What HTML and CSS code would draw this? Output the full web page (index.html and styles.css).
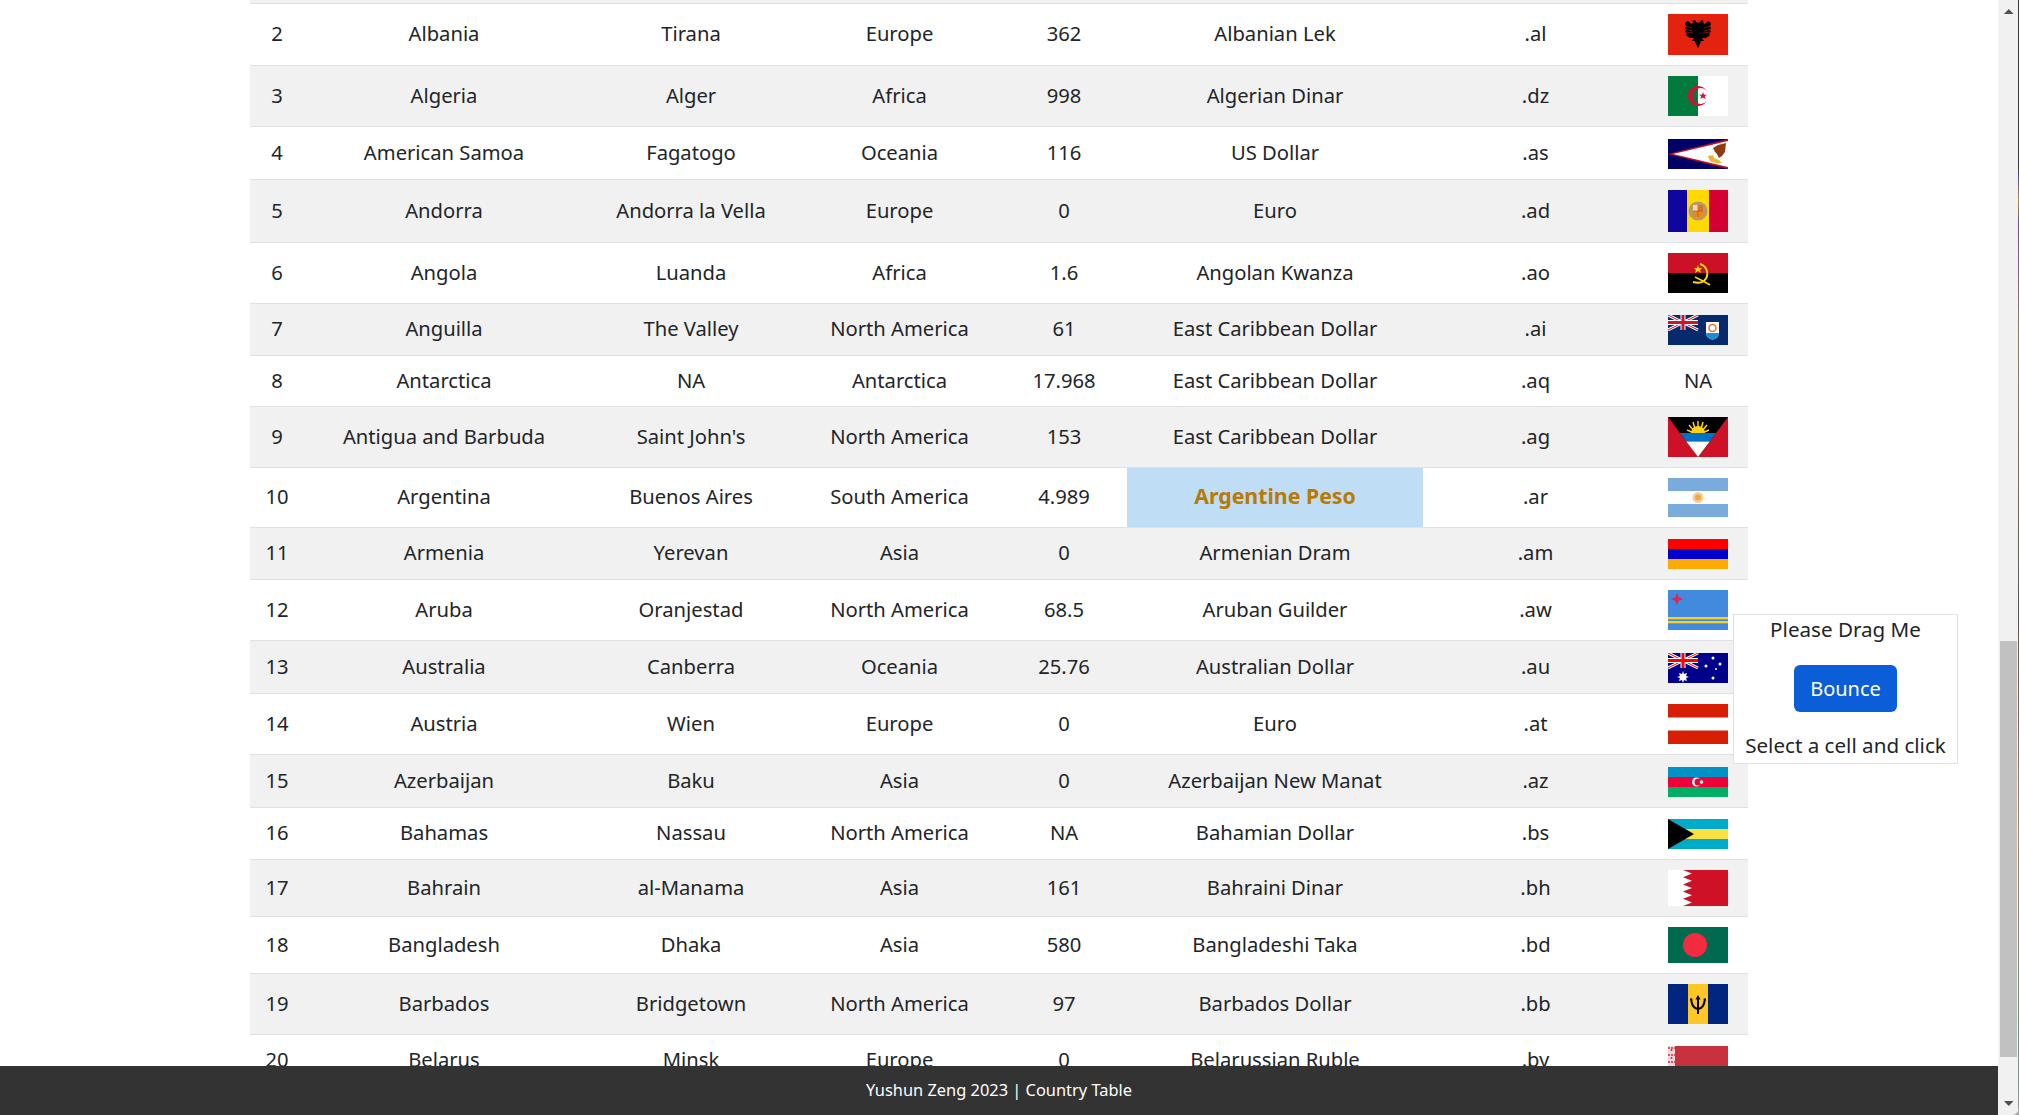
FILE: index.html
```html
<!DOCTYPE html>
<html lang="en">
<head>
<meta charset="utf-8">
<title>Country Table</title>
<link rel="stylesheet" href="styles.css">
</head>
<body>
<div class="window">
<main class="viewport">
<div class="wrap">
<table class="table">
<colgroup><col class="c0"><col class="c1"><col class="c2"><col class="c3"><col class="c4"><col class="c5"><col class="c6"><col class="c7"></colgroup>
<tbody>
<tr class="stub"><td colspan="8"></td></tr>
<tr class="h62"><td>2</td><td>Albania</td><td>Tirana</td><td>Europe</td><td>362</td><td>Albanian Lek</td><td>.al</td><td><svg class="flag" width="60" height="41" viewBox="0 0 60 41"><rect width="60" height="41" fill="#e32310"/><path d="M30 34L28 30L27 27L24 27L26 24L22 24L19 22L18 20L19 19L17 18L18 16L17 14L18 12L17 10L18 8L20 7L22 9L24 10L25 8L24 7L27 6L28 8L30 9L32 8L33 6L36 7L35 8L36 10L38 9L40 7L42 8L43 10L42 12L43 14L42 16L43 18L41 19L42 20L41 22L38 24L34 24L36 27L33 27L32 30z" fill="#000"/><path d="M17 12l7 2M17 15l7 2M18 18l7 1M43 12l-7 2M43 15l-7 2M42 18l-7 1" stroke="#e32310" stroke-width=".5"/></svg></td></tr>
<tr class="h61"><td>3</td><td>Algeria</td><td>Alger</td><td>Africa</td><td>998</td><td>Algerian Dinar</td><td>.dz</td><td><svg class="flag" width="60" height="40" viewBox="0 0 60 40"><rect width="60" height="40" fill="#fff"/><rect width="30" height="40" fill="#007a3d"/><path d="M38.700 15A10 10 0 1 0 38.700 25A8 8 0 1 1 38.700 15z" fill="#d21034"/><path d="M35 16l1 2.700 3-.2-2.300 1.800 1 2.700-2.700-1.500-2.700 1.500 1-2.700-2.300-1.800 3 .2z" fill="#d21034"/></svg></td></tr>
<tr class="h53"><td>4</td><td>American Samoa</td><td>Fagatogo</td><td>Oceania</td><td>116</td><td>US Dollar</td><td>.as</td><td><svg class="flag" width="60" height="30" viewBox="0 0 60 30"><rect width="60" height="30" fill="#000066"/><path d="M60 0L0 15l60 15z" fill="#bd1021"/><path d="M60 2L5 15l55 13z" fill="#fff"/><path d="M58 4l-8 2-5 3 2 4 2 2 2 4 3-2 3-4z" fill="#8c3d10"/><path d="M40 17l5-1 1 3 5 2 3 3-6 0-5-1-2-3z" fill="#e6b838"/></svg></td></tr>
<tr class="h63"><td>5</td><td>Andorra</td><td>Andorra la Vella</td><td>Europe</td><td>0</td><td>Euro</td><td>.ad</td><td><svg class="flag" width="60" height="42" viewBox="0 0 60 42"><rect width="60" height="42" fill="#ffd900"/><rect width="19" height="42" fill="#10069f"/><rect x="41" width="19" height="42" fill="#d50032"/><circle cx="30" cy="21" r="9.500" fill="#b39a70"/><rect x="25" y="15" width="5" height="6" fill="#f3d9a8"/><path d="M30 15h5v12h-10v-6h5z" fill="#e8891c"/><path d="M30 15v12M25 21h10M32 15v6M34 15v6" stroke="#c8402a" stroke-width=".6"/></svg></td></tr>
<tr class="h61"><td>6</td><td>Angola</td><td>Luanda</td><td>Africa</td><td>1.6</td><td>Angolan Kwanza</td><td>.ao</td><td><svg class="flag" width="60" height="40" viewBox="0 0 60 40"><rect width="60" height="20" fill="#cc1126"/><rect y="20" width="60" height="20" fill="#000"/><path d="M32 11a10 10 0 0 1 4 17c-3 2-7 2-11 1" fill="none" stroke="#f9d616" stroke-width="2"/><path d="M27 24l8 4 7 4" fill="none" stroke="#f9d616" stroke-width="1.500"/><path d="M30 12l1 3 3 0-2 2 1 3-3-2-3 2 1-3-2-2 3 0z" fill="#f9d616"/></svg></td></tr>
<tr class="h52"><td>7</td><td>Anguilla</td><td>The Valley</td><td>North America</td><td>61</td><td>East Caribbean Dollar</td><td>.ai</td><td><svg class="flag" width="60" height="30" viewBox="0 0 60 30"><rect width="60" height="30" fill="#062a6b"/><path d="M0 0l30 15M30 0L0 15" stroke="#fff" stroke-width="3"/><path d="M0 0l30 15M30 0L0 15" stroke="#cf142b" stroke-width="1"/><path d="M15 0v15M0 7.500h30" stroke="#fff" stroke-width="5"/><path d="M15 0v15M0 7.500h30" stroke="#cf142b" stroke-width="3"/><path d="M38 7h13v11a6.500 6.500 0 0 1-13 0z" fill="#fff"/><path d="M38 18h13a6.500 6.500 0 0 1-13 0z" fill="#1a8fd0"/><circle cx="44.500" cy="13" r="3.500" fill="none" stroke="#e8762c" stroke-width="1.500"/></svg></td></tr>
<tr class="h51"><td>8</td><td>Antarctica</td><td>NA</td><td>Antarctica</td><td>17.968</td><td>East Caribbean Dollar</td><td>.aq</td><td>NA</td></tr>
<tr class="h61"><td>9</td><td>Antigua and Barbuda</td><td>Saint John's</td><td>North America</td><td>153</td><td>East Caribbean Dollar</td><td>.ag</td><td><svg class="flag" width="60" height="40" viewBox="0 0 60 40"><rect width="60" height="40" fill="#ce1126"/><path d="M0 0h60L30 40z" fill="#000"/><circle cx="30" cy="16" r="7" fill="#fcd116"/><path d="M30 4v8M25 5l2 7M35 5l-2 7M21 8l5 6M39 8l-5 6M19 13l7 3M41 13l-7 3" stroke="#fcd116" stroke-width="1.500"/><path d="M12 16h36l-6.300 8.500H18.300z" fill="#0072c6"/><path d="M18.300 24.500h23.400L30 40z" fill="#fff"/></svg></td></tr>
<tr class="h60"><td>10</td><td>Argentina</td><td>Buenos Aires</td><td>South America</td><td>4.989</td><td class="selected">Argentine Peso</td><td>.ar</td><td><svg class="flag" width="60" height="39" viewBox="0 0 60 39"><rect width="60" height="39" fill="#fff"/><rect width="60" height="13" fill="#79acdc"/><rect y="26" width="60" height="13" fill="#79acdc"/><circle cx="30" cy="19.500" r="5.500" fill="#f6cf9a"/><circle cx="30" cy="19.500" r="3" fill="#f0a93a"/></svg></td></tr>
<tr class="h52"><td>11</td><td>Armenia</td><td>Yerevan</td><td>Asia</td><td>0</td><td>Armenian Dram</td><td>.am</td><td><svg class="flag" width="60" height="30" viewBox="0 0 60 30"><rect width="60" height="10" fill="#f00"/><rect y="10" width="60" height="10" fill="#00c"/><rect y="20" width="60" height="10" fill="#fa0"/></svg></td></tr>
<tr class="h61"><td>12</td><td>Aruba</td><td>Oranjestad</td><td>North America</td><td>68.5</td><td>Aruban Guilder</td><td>.aw</td><td><svg class="flag" width="60" height="40" viewBox="0 0 60 40"><rect width="60" height="40" fill="#418ade"/><rect y="27" width="60" height="2.300" fill="#fcd116"/><rect y="31" width="60" height="2.300" fill="#fcd116"/><path d="M9 3l1.700 4.300 4.300 1.700-4.300 1.700-1.700 4.300-1.700-4.300-4.300-1.700 4.300-1.700z" fill="#e0244a"/></svg></td></tr>
<tr class="h53"><td>13</td><td>Australia</td><td>Canberra</td><td>Oceania</td><td>25.76</td><td>Australian Dollar</td><td>.au</td><td><svg class="flag" width="60" height="30" viewBox="0 0 60 30"><rect width="60" height="30" fill="#00008b"/><path d="M0 0l30 15M30 0L0 15" stroke="#fff" stroke-width="3"/><path d="M0 0l30 15M30 0L0 15" stroke="#f00" stroke-width="1"/><path d="M15 0v15M0 7.500h30" stroke="#fff" stroke-width="5"/><path d="M15 0v15M0 7.500h30" stroke="#f00" stroke-width="3"/><path d="M15 18l1 3 3-1-1 3 3 1-3 1 1 3-3-1-1 3-1-3-3 1 1-3-3-1 3-1-1-3 3 1z" fill="#fff"/><circle cx="45" cy="5" r="1.500" fill="#fff"/><circle cx="38" cy="13" r="1.500" fill="#fff"/><circle cx="52" cy="11" r="1.500" fill="#fff"/><circle cx="48" cy="16" r="1" fill="#fff"/><circle cx="45" cy="25" r="1.500" fill="#fff"/></svg></td></tr>
<tr class="h61"><td>14</td><td>Austria</td><td>Wien</td><td>Europe</td><td>0</td><td>Euro</td><td>.at</td><td><svg class="flag" width="60" height="40" viewBox="0 0 60 40"><rect width="60" height="40" fill="#fff"/><rect width="60" height="13.500" fill="#d81e05"/><rect y="26.500" width="60" height="13.500" fill="#d81e05"/></svg></td></tr>
<tr class="h53"><td>15</td><td>Azerbaijan</td><td>Baku</td><td>Asia</td><td>0</td><td>Azerbaijan New Manat</td><td>.az</td><td><svg class="flag" width="60" height="30" viewBox="0 0 60 30"><rect width="60" height="10" fill="#0092c7"/><rect y="10" width="60" height="10" fill="#ef0039"/><rect y="20" width="60" height="10" fill="#00ae65"/><circle cx="28.500" cy="15" r="4.500" fill="#fff"/><circle cx="30" cy="15" r="3.500" fill="#ef0039"/><circle cx="33.500" cy="15" r="1.800" fill="#fff"/></svg></td></tr>
<tr class="h52"><td>16</td><td>Bahamas</td><td>Nassau</td><td>North America</td><td>NA</td><td>Bahamian Dollar</td><td>.bs</td><td><svg class="flag" width="60" height="30" viewBox="0 0 60 30"><rect width="60" height="30" fill="#00abc9"/><rect y="10" width="60" height="10" fill="#fae042"/><path d="M0 0l26 15L0 30z" fill="#000"/></svg></td></tr>
<tr class="h57"><td>17</td><td>Bahrain</td><td>al-Manama</td><td>Asia</td><td>161</td><td>Bahraini Dinar</td><td>.bh</td><td><svg class="flag" width="60" height="36" viewBox="0 0 60 36"><rect width="60" height="36" fill="#ce1126"/><path d="M0 0h15l9 3.600-9 3.600 9 3.600-9 3.600 9 3.600-9 3.600 9 3.600-9 3.600 9 3.600-9 3.600H0z" fill="#fff"/></svg></td></tr>
<tr class="h57"><td>18</td><td>Bangladesh</td><td>Dhaka</td><td>Asia</td><td>580</td><td>Bangladeshi Taka</td><td>.bd</td><td><svg class="flag" width="60" height="36" viewBox="0 0 60 36"><rect width="60" height="36" fill="#006a4e"/><circle cx="27" cy="18" r="12" fill="#f42a41"/></svg></td></tr>
<tr class="h61"><td>19</td><td>Barbados</td><td>Bridgetown</td><td>North America</td><td>97</td><td>Barbados Dollar</td><td>.bb</td><td><svg class="flag" width="60" height="40" viewBox="0 0 60 40"><rect width="60" height="40" fill="#00267f"/><rect x="20" width="20" height="40" fill="#ffc726"/><path d="M30 13v17" stroke="#000" stroke-width="2"/><path d="M27.500 15.500L30 11l2.500 4.500z" fill="#000"/><path d="M23 15c1 6 2 9 7 10 5-1 6-4 7-10" fill="none" stroke="#000" stroke-width="2"/><path d="M22 14l3 1-2 1zM38 14l-3 1 2 1z" fill="#000"/></svg></td></tr>
<tr class="h52"><td>20</td><td>Belarus</td><td>Minsk</td><td>Europe</td><td>0</td><td>Belarussian Ruble</td><td>.by</td><td><svg class="flag" width="60" height="30" viewBox="0 0 60 30"><rect width="60" height="30" fill="#c8313e"/><rect width="7" height="30" fill="#f1d5d8"/><path d="M0 2h7M3.500 3v3M0 9h7M3.500 11v3M0 16h7" stroke="#c8313e" stroke-width="1.500" stroke-dasharray="2 1"/></svg></td></tr>
</tbody>
</table>
</div>
<aside class="panel">
<p class="panel-title">Please Drag Me</p>
<button class="bounce" type="button">Bounce</button>
<p class="panel-hint">Select a cell and click</p>
</aside>
<footer class="footer">Yushun Zeng 2023 | Country Table</footer>
</main>
<div class="scrollbar">
<svg class="arrow" width="20" height="20" viewBox="0 0 20 20"><path d="M6 14h9.500l-4.750-5z" fill="#505050"/></svg>
<div class="track"><div class="thumb"></div></div>
<svg class="arrow" width="20" height="20" viewBox="0 0 20 20"><path d="M6 6h9.500l-4.750 5z" fill="#505050"/></svg>
</div>
<div class="edge"></div>
</div>
</body>
</html>
```
FILE: styles.css
```css
* { box-sizing: border-box; }
html, body { margin: 0; height: 100%; overflow: hidden; background: #aaa; }
body { font-family: "Noto Sans", "Open Sans", sans-serif; color: #212529; font-size: 20.2px; }
.window { display: flex; height: 100vh; background: #fff; border-bottom-right-radius: 8px; overflow: hidden; }
.viewport { position: relative; flex: 1; min-width: 0; overflow: hidden; }
.wrap { padding: 0 250px; }
.table { width: 1498px; table-layout: fixed; border-collapse: collapse; }
.c0 { width: 54px; } .c1 { width: 280px; } .c2 { width: 214px; } .c3 { width: 203px; }
.c4 { width: 126px; } .c5 { width: 296px; } .c6 { width: 225px; } .c7 { width: 100px; }
td { padding: 0 0 2px; text-align: center; vertical-align: middle; line-height: 30px; white-space: nowrap; }
td:has(.flag) { padding: 0; }
tr { border-bottom: 1px solid #dee2e6; }
tbody tr:nth-child(odd) { background: #f1f1f1; }
.stub { height: 3px; }
.stub td { line-height: 0; padding: 0; }
.h51 { height: 51px; } .h52 { height: 52px; } .h53 { height: 53px; } .h57 { height: 57px; }
.h60 { height: 60px; } .h61 { height: 61px; } .h62 { height: 62px; } .h63 { height: 63px; }
.flag { display: block; margin: 0 auto; }
.h52 .flag, .h53 .flag { margin-top: 2px; }
.selected { background: #c0ddf6; color: #b87a00; font-weight: 700; font-size: 21.3px; }
.panel { position: absolute; left: 1733px; top: 614px; width: 225px; height: 150px; background: #fff; border: 1px solid #dee2e6; display: flex; flex-direction: column; align-items: center; font-size: 20.6px; }
.panel p { margin: 0; line-height: 30px; white-space: nowrap; }
.panel .panel-title { margin-top: -1px; }
.bounce { font: inherit; font-size: 20px; color: #fff; background: #0b5ed7; border: 0; border-radius: 6px; width: 103px; height: 47px; padding: 0; margin: 21px 0 18px; }
.footer { position: absolute; left: 0; right: 0; bottom: 0; height: 49px; background: #333; color: #fff; font-size: 16.4px; line-height: 47px; text-align: center; }
.scrollbar { width: 20px; flex: none; display: flex; flex-direction: column; background: #f1f1f1; }
.arrow { display: block; flex: none; }
.track { flex: 1; display: flex; flex-direction: column; padding: 621px 1px 38px 2px; }
.thumb { flex: 1; background: #c1c1c1; }
.edge { width: 1px; flex: none; background: linear-gradient(#3a3a3a 0, #3a3a3a 15%, #5b4a8c 16%, #a89040 18%, #6a5080 20%, #8a8070 30%, #555 55%, #b08060 75%, #6a9080 92%, #999 100%); }
```
